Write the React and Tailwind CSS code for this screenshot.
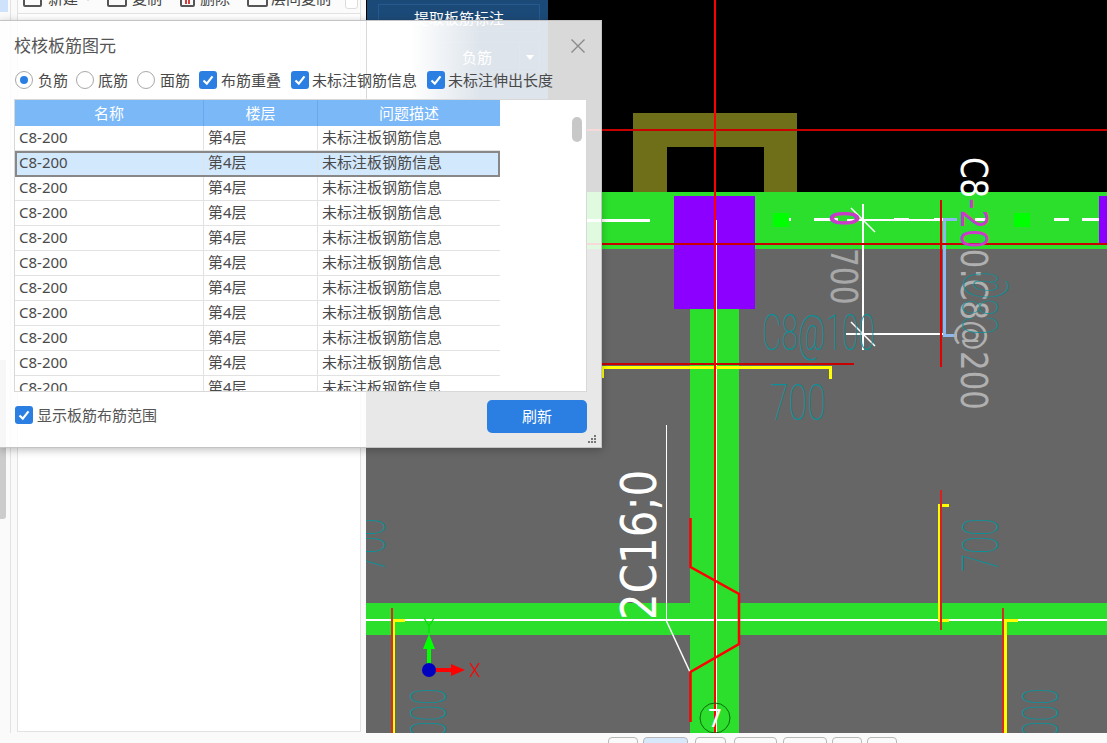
import React from "react";

const FONT = "[font-family:'Noto_Sans','Noto_Sans_CJK_SC',sans-serif]";
const rows = Array.from({ length: 11 }, (_, i) => i);
const pagerButtons = [
  { w: "w-[30px]", gap: "mr-[5px]" },
  { w: "w-[45px] bg-[#d8e8fb] border-[#7aa8e0]", gap: "mr-[7px]" },
  { w: "w-[31px]", gap: "mr-[8px]" },
  { w: "w-[43px]", gap: "mr-[6px]" },
  { w: "w-[44px]", gap: "mr-[5px]" },
  { w: "w-[30px]", gap: "mr-[5px]" },
  { w: "w-[30px]", gap: "" },
];

const Check = () => (
  <span className="flex h-[18px] w-[18px] shrink-0 items-center justify-center rounded-[3px] bg-[#2b7fe2]">
    <svg width="14" height="14" viewBox="0 0 14 14" fill="none" stroke="white" strokeWidth="2.2">
      <path d="M2.5 7.5 L5.8 10.6 L11.5 3.4" />
    </svg>
  </span>
);

const Radio = ({ checked }) => (
  <span className="flex h-[18px] w-[18px] shrink-0 items-center justify-center rounded-full border border-[#a8a8a8] bg-white">
    {checked && <span className="h-[8px] w-[8px] rounded-full bg-[#2b7fe2]" />}
  </span>
);

const Dialog = () => (
  <div className="absolute left-0 top-[20px] flex h-[428px] w-[602px] flex-col border-r border-b border-t border-[#c4c4c4] bg-white/85 shadow-[0_2px_8px_rgba(0,0,0,0.25)]">
    {/* title */}
    <div className="flex h-[49px] shrink-0 items-center justify-between pl-[14px] pr-[16px]">
      <span className="text-[17px] text-[#555]">校核板筋图元</span>
      <svg width="14" height="14" viewBox="0 0 14 14" stroke="#8a8a8a" strokeWidth="1.4">
        <path d="M0.5 0.5 L13.5 13.5 M13.5 0.5 L0.5 13.5" />
      </svg>
    </div>

    {/* filters */}
    <div className="flex h-[20px] shrink-0 items-center pl-[15px] text-[15px] text-[#4a4a4a]">
      <Radio checked />
      <span className="ml-[5px] mr-[8px]">负筋</span>
      <Radio />
      <span className="ml-[4px] mr-[9px]">底筋</span>
      <Radio />
      <span className="ml-[5px] mr-[9px]">面筋</span>
      <Check />
      <span className="ml-[4px] mr-[10px]">布筋重叠</span>
      <Check />
      <span className="ml-[3px] mr-[10px]">未标注钢筋信息</span>
      <Check />
      <span className="ml-[3px]">未标注伸出长度</span>
    </div>

    {/* table */}
    <div className="relative ml-[14px] mt-[9px] h-[293px] w-[573px] shrink-0 overflow-hidden border border-[#d8d8d8] bg-white">
      <div className="w-[485px]">
        <div className="flex h-[26px] items-center bg-[#7ab8f8] text-center text-[15px] text-white">
          <div className="w-[189px] border-r border-[#68a8ec] leading-[26px]">名称</div>
          <div className="w-[114px] border-r border-[#68a8ec] leading-[26px]">楼层</div>
          <div className="flex-1 leading-[26px]">问题描述</div>
        </div>
        {rows.map((i) =>
          i === 1 ? (
            <div key={i} className="relative -my-[0.5px] flex h-[26px] items-center border-2 border-[#888] bg-[#d2e8fd] text-[15px] text-[#4a4a4a]">
              <div className="h-full w-[187px] border-r border-[#e2e2e2] pl-[2px] leading-[19px]">C8-200</div>
              <div className="h-full w-[114px] border-r border-[#e2e2e2] pl-[4px] leading-[19px]">第4层</div>
              <div className="h-full flex-1 pl-[4px] leading-[19px]">未标注板钢筋信息</div>
            </div>
          ) : (
            <div key={i} className="flex h-[25px] items-center border-b border-[#e2e2e2] text-[15px] text-[#4a4a4a]">
              <div className="h-full w-[189px] border-r border-[#e2e2e2] pl-[4px] leading-[22px]">C8-200</div>
              <div className="h-full w-[114px] border-r border-[#e2e2e2] pl-[4px] leading-[22px]">第4层</div>
              <div className="h-full flex-1 pl-[4px] leading-[22px]">未标注板钢筋信息</div>
            </div>
          )
        )}
      </div>
      {/* scroll thumb */}
      <div className="absolute right-[4px] top-[17px] h-[25px] w-[10px] rounded-[5px] bg-[#c8c8c8]" />
    </div>

    {/* footer */}
    <div className="flex items-start justify-between pl-[15px] pr-[14px] pt-[8px]">
      <div className="mt-[4px] flex items-center gap-[4px] text-[15px] text-[#555]">
        <Check />
        <span>显示板筋布筋范围</span>
      </div>
      <button className="h-[33px] w-[100px] rounded-[5px] bg-[#2b7fe2] text-[15px] text-white">刷新</button>
    </div>

    {/* resize grip */}
    <svg className="absolute bottom-[3px] right-[4px]" width="10" height="10" viewBox="0 0 10 10" fill="#777">
      <rect x="7" y="1" width="2" height="2" />
      <rect x="4" y="4" width="2" height="2" />
      <rect x="7" y="4" width="2" height="2" />
      <rect x="1" y="7" width="2" height="2" />
      <rect x="4" y="7" width="2" height="2" />
      <rect x="7" y="7" width="2" height="2" />
    </svg>
  </div>
);

const Toolbar = () => (
  <div className="h-[14px] overflow-hidden border-b border-[#e2e2e2] bg-[#fbfbfb]">
    <div className="-mt-[16px] flex h-[28px] items-center text-[15px] text-[#444]">
      <span className="ml-[5px] h-[18px] w-[19px] shrink-0 rounded-[2px] border-2 border-[#555]" />
      <span className="ml-[6px]">新建</span>
      <span className="ml-[8px] w-[6px] text-[8px] text-[#999]">▾</span>
      <span className="relative ml-[15px] h-[18px] w-[20px] shrink-0 rounded-[2px] border-2 border-[#555]">
        <span className="absolute -right-[2px] -top-[2px] h-[10px] w-[14px] bg-[#4a90e2]" />
      </span>
      <span className="ml-[5px]">复制</span>
      <span className="relative ml-[18px] h-[18px] w-[15px] shrink-0 rounded-[2px] border-2 border-[#555]">
        <span className="absolute bottom-[1px] left-[3px] h-[6px] w-[5px] border-x-2 border-[#d04040]" />
      </span>
      <span className="ml-[5px]">删除</span>
      <span className="relative ml-[17px] h-[18px] w-[21px] shrink-0 rounded-[2px] border-2 border-[#555]">
        <span className="absolute -right-[2px] -top-[2px] h-[10px] w-[14px] bg-[#4a90e2]" />
      </span>
      <span className="ml-[3px] whitespace-nowrap">层间复制</span>
      <span className="ml-[14px] h-[22px] w-[13px] shrink-0 rounded-[3px] border border-[#ddd] bg-white" />
    </div>
  </div>
);

const Sidebar = () => (
  <aside className="flex h-full w-[366px] shrink-0 bg-[#fafafa]">
    <div className="relative h-full w-[11px] shrink-0 border-r border-[#e2e2e2]">
      <div className="h-[12px] w-[8px] bg-[#cfe2fb]" />
      <div className="ml-0 mt-[348px] h-[159px] w-[6px] rounded-br-[3px] bg-[#cccccc]" />
    </div>
    <div className="ml-[6px] mb-[1px] w-[344px] border-x border-b border-[#e2e2e2] bg-white">
      <Toolbar />
    </div>
  </aside>
);

const BlueTools = () => (
  <div className="absolute left-[1px] top-0 h-[100px] w-[181px] overflow-hidden bg-[#1c4a78] text-white">
    <div className="absolute left-[11px] right-[8px] top-[4px] flex h-[28px] items-center justify-center border border-[#245a90] text-[15px]">
      提取板筋标注
    </div>
    <div className="absolute left-[11px] right-[8px] top-[42px] flex h-[30px] items-center justify-end border border-[#245a90] text-[15px]">
      <span className="mr-[47px]">负筋</span>
      <span className="absolute right-0 flex h-[28px] w-[20px] items-center justify-center border-l border-[#245a90]">
        <span className="h-0 w-0 border-x-[4px] border-t-[5px] border-x-transparent border-t-white" />
      </span>
    </div>
    {/* the dialog's soft fade over the dark panel */}
    <div className="absolute inset-x-0 bottom-0 top-[21px] bg-gradient-to-r from-white from-[24%] to-transparent to-[63%]" />
  </div>
);

const CadDrawing = () => (
  <svg className="block h-full w-full bg-[#666666]" viewBox="366 0 741 733" shapeRendering="crispEdges">
    {/* background regions */}
    <rect x="366" y="0" width="741" height="192" fill="#000" />
    <rect x="366" y="192" width="741" height="57" fill="#2cdf2c" />
    <rect x="366" y="603" width="741" height="32" fill="#2cdf2c" />
    <rect x="690" y="249" width="49" height="484" fill="#2cdf2c" />
    <path d="M632.5 192 V113 H797 V192 H764 V147 H666.5 V192 Z" fill="#6f6f1a" />
    <rect x="674" y="196" width="81" height="113" fill="#8b00ff" />
    <rect x="1099" y="196" width="8" height="47" fill="#8b00ff" />
    <rect x="773" y="213" width="16" height="14" fill="#00ff00" />
    <rect x="1014" y="213" width="16" height="14" fill="#00ff00" />

    {/* axis lines */}
    <g fill="#fff">
      <rect x="366" y="219" width="284" height="2.5" />
      <rect x="789" y="218" width="2" height="3" />
      <rect x="814" y="218" width="24" height="3" />
      <rect x="847" y="219" width="97" height="1.5" />
      <rect x="894" y="218" width="15" height="3" />
      <rect x="934" y="218" width="10" height="3" />
      <rect x="975" y="218" width="12" height="3" />
      <rect x="1054" y="218" width="15" height="3" />
      <rect x="1082" y="218" width="17" height="3" />
      <rect x="366" y="619" width="741" height="2" />
      <rect x="716" y="220" width="1" height="513" />
      <rect x="862" y="204" width="2" height="146" />
      <rect x="846" y="333" width="99" height="2" />
      <rect x="666" y="425" width="1" height="195" />
    </g>
    <g stroke="#fff" strokeWidth="1.5" shapeRendering="auto">
      <path d="M851 208 L875 232 M851 322 L875 346" />
      <path d="M666 620 L690 672" />
    </g>

    {/* blue leader */}
    <path d="M957 219.5 H944.5 V335 H957" fill="none" stroke="#8fb8f0" strokeWidth="3" />

    {/* yellow bars */}
    <g fill="none" stroke="#ffff00" strokeWidth="3">
      <path d="M602.5 378 V367.5 H830 V379" />
      <path d="M949 505 H939 V620 H949" />
      <path d="M405 620 H393.5 V733" />
      <path d="M1018 620 H1005.5 V733" />
    </g>

    {/* red lines */}
    <g fill="#e00000">
      <rect x="366" y="129" width="741" height="2" fill="#c80000" />
      <rect x="366" y="243" width="741" height="2" fill="#c80000" />
      <rect x="600" y="363" width="254" height="2" fill="#c80000" />
      <rect x="714" y="0" width="2" height="733" fill="#ff0000" />
      <rect x="940" y="200" width="2" height="167" />
      <rect x="940" y="490" width="2" height="140" fill="#d82020" />
      <rect x="391" y="608" width="2" height="125" fill="#d03020" />
      <rect x="1002" y="608" width="2" height="125" fill="#d03020" />
    </g>
    <path d="M690.5 518 V567 L739 594 V644 L690.5 672 V722" fill="none" stroke="#ff0000" strokeWidth="2.5" shapeRendering="auto" />

    <g shapeRendering="auto">
      {/* annotation text */}
      <g fontFamily="'DejaVu Sans', sans-serif" fontSize="38">
        <text transform="translate(961 157) rotate(90) scale(.814 1)" fill="#b0b0b0">
          <tspan fill="#fff">C8</tspan>
          <tspan fill="#c83cc8">-20</tspan>
          <tspan>0:C8@200</tspan>
        </text>
        <text transform="translate(831 248) rotate(90) scale(.78 1)" fill="#a8a8a8">700</text>
        <text transform="translate(831 211) rotate(90) scale(.6 1)" fill="#c83cc8" stroke="#c83cc8" strokeWidth="1.5">0</text>
      </g>
      <text transform="translate(656 620) rotate(-90) scale(.84 1)" fontFamily="'DejaVu Sans', sans-serif" fontSize="50" fill="#fff">2C16;0</text>

      <g fontFamily="Roboto, sans-serif" fontWeight="100" fill="#0a9098">
        <text transform="translate(762 350) scale(.6 1)" fontSize="50">C8@100</text>
        <text transform="translate(770 420) scale(.68 1)" fontSize="50">700</text>
        <text transform="translate(998 335) rotate(-90) scale(.6 1)" fontSize="50" opacity=".8">C8@</text>
        <text transform="translate(998 572) rotate(-90) scale(.66 1)" fontSize="50">700</text>
        <text transform="translate(385 572) rotate(-90) scale(.66 1)" fontSize="50">700</text>
        <text transform="translate(446 754) rotate(-90) scale(.6 1)" fontSize="50">1000</text>
        <text transform="translate(1058 754) rotate(-90) scale(.6 1)" fontSize="50">1000</text>
      </g>

      {/* coordinate axes */}
      <path d="M429 670 V648" stroke="#00ff00" strokeWidth="4" />
      <path d="M429 634 L435 649 H423 Z" fill="#00ff00" />
      <path d="M424 618 L429 626 L434 618 M429 626 V633" fill="none" stroke="#00e000" strokeWidth="1.2" />
      <path d="M429 670 H451" stroke="#ff0000" strokeWidth="4" />
      <path d="M465 670 L451 664 V676 Z" fill="#ff0000" />
      <circle cx="429" cy="670" r="7" fill="#0000c0" />
      <path d="M470 663 L479 677 M479 663 L470 677" fill="none" stroke="#ff0000" strokeWidth="1.3" />

      {/* grid bubble */}
      <circle cx="715" cy="718" r="15" fill="none" stroke="#0a6a0a" strokeWidth="1" />
      <text x="715" y="727" textAnchor="middle" fontFamily="'DejaVu Sans', sans-serif" fontSize="24" fill="#fff">7</text>
    </g>
  </svg>
);

export default function App() {
  return (
    <div className={`relative flex h-[743px] w-[1107px] flex-col overflow-hidden bg-[#fafafa] ${FONT}`}>
      <div className="flex h-[733px] shrink-0">
        <Sidebar />
        <main className="relative min-w-0 flex-1">
          <CadDrawing />
          <BlueTools />
        </main>
      </div>
      {/* view buttons, cut by the window edge */}
      <div className="flex flex-1 items-start overflow-hidden pl-[608px] pt-[4px]">
        {pagerButtons.map((b, i) => (
          <span key={i} className={`h-[20px] shrink-0 rounded-[4px] border border-[#b8b8b8] ${b.w} ${b.gap}`} />
        ))}
      </div>
      <Dialog />
    </div>
  );
}
